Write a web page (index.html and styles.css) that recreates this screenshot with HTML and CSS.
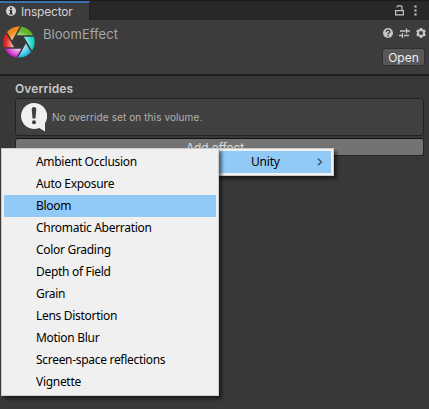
FILE: index.html
```html
<!DOCTYPE html>
<html lang="en">
<head>
<meta charset="utf-8">
<title>Inspector</title>
<link rel="stylesheet" href="styles.css">
</head>
<body>
<div class="window">
  <div class="tabbar">
    <div class="tab">
      <svg class="info" width="10" height="10" viewBox="0 0 10 10"><circle cx="5" cy="5" r="5" fill="#d2d2d2"/><path d="M4 1.5h2v1.7H4zM3.5 4H6v3.2h.7v1.2H3.3V7.2H4V5.1h-.5z" fill="#353535"/></svg>
      <span>Inspector</span>
    </div>
    <div class="tabtools">
      <svg width="9" height="11" viewBox="0 0 9 11" fill="none" stroke="#c4c4c4"><path d="M.6 5.6h7.8v4.3H.6zM2 2.5V2Q2 .8 3.2.8h2.4Q7 .8 7 2v3.5" stroke-width="1.2"/></svg>
      <svg width="3" height="11" viewBox="0 0 3 11" fill="#c4c4c4"><path d="M.4.4h2.2v2.2H.4zM.4 4.4h2.2v2.2H.4zM.4 8.4h2.2v2.2H.4z"/></svg>
    </div>
  </div>
  <header class="header">
    <svg class="logo" width="32" height="32" viewBox="-16 -16 32 32">
      <defs>
        <clipPath id="disc"><circle r="15.6"/></clipPath>
        <radialGradient id="shine" gradientUnits="userSpaceOnUse" cx="0" cy="2" r="16"><stop offset=".3" stop-color="#fff" stop-opacity=".75"/><stop offset=".85" stop-color="#fff" stop-opacity="0"/></radialGradient>
      </defs>
      <g clip-path="url(#disc)">
        <path fill="#f08a18" d="M-7-.0-13.5-11-16-16 2.7-17-3.5-6z"/>
        <path fill="#62b52c" d="M-3.5-6 2.7-17 18-17V-6H3.5z"/>
        <path fill="#19d3c4" d="M3.5-6H18V11h-4.5L7 0z"/>
        <path fill="#16b4e0" d="M7 0 13.5 11 16 16-2.7 17 3.5 6z"/>
        <path fill="#c81fc8" d="M3.5 6-2.7 17-18 17V6h14.5z"/>
        <path fill="#e52222" d="M-3.5 6H-18V-11h4.5L-7 0z"/>
        <circle r="16" fill="url(#shine)"/>
        <path fill="#383838" d="M-3.5-6h7L7 0 3.5 6h-7L-7 0z"/>
        <path fill="none" stroke="#383838" stroke-width="1.5" d="M-7 0 2.7-17M-3.5-6H17M3.5-6 13.5 11M7 0-2.7 17M3.5 6H-17M-3.5 6-13.5-11"/>
      </g>
    </svg>
    <h1>BloomEffect</h1>
    <div class="actions">
      <div class="icons">
        <svg width="10" height="10" viewBox="0 0 10 10"><circle cx="5" cy="5" r="5" fill="#c4c4c4"/><path d="M3.2 3.8Q3.3 2.2 5 2.2t1.8 1.5Q6.8 4.5 5.8 5 5 5.4 5 6.2M5 7v1.4" fill="none" stroke="#353535" stroke-width="1.3"/></svg>
        <svg width="11" height="10" viewBox="0 0 11 10" fill="none" stroke="#c4c4c4" stroke-width="1.3"><path d="M1 3h5.5M8 3h3M7.5.5v5M0 7.5h3M5 7.5h5M3.5 5v5"/></svg>
        <svg width="10" height="10" viewBox="-5 -5 10 10" stroke="#c4c4c4" fill="none"><circle r="3" stroke-width="2.2"/><path stroke-width="2.4" d="M0-5v2M0 5V3M-4.3-2.5-2.6-1.5M4.3 2.5 2.6 1.5M-4.3 2.5-2.6 1.5M4.3-2.5 2.6-1.5"/></svg>
      </div>
      <button class="open">Open</button>
    </div>
  </header>
  <main>
    <h2>Overrides</h2>
    <div class="notice">
      <svg width="26" height="29" viewBox="0 0 26 29"><path fill="#f0f0f0" d="M13 0a13 13 0 1 0 5.3 24.9L24 28.5V20A13 13 0 0 0 13 0z"/><path fill="#404040" d="M10.7 6q0-2 2.3-2t2.3 2l-.8 9.5h-3z"/><circle cx="13" cy="19.2" r="2" fill="#404040"/></svg>
      <span>No override set on this volume.</span>
    </div>
    <button class="add">Add effect</button>
  </main>
</div>
<div class="menu submenu"><div class="item selected"><span>Unity</span><svg width="6" height="8" viewBox="0 0 6 8"><path d="M1 .7 4.4 4 1 7.3" fill="none" stroke="#43505c" stroke-width="1.4"/></svg></div></div>
<div class="menu effects">
  <div class="item"><span>Ambient Occlusion</span></div>
  <div class="item"><span>Auto Exposure</span></div>
  <div class="item selected"><span>Bloom</span></div>
  <div class="item"><span>Chromatic Aberration</span></div>
  <div class="item"><span>Color Grading</span></div>
  <div class="item"><span>Depth of Field</span></div>
  <div class="item"><span>Grain</span></div>
  <div class="item"><span>Lens Distortion</span></div>
  <div class="item"><span>Motion Blur</span></div>
  <div class="item"><span>Screen-space reflections</span></div>
  <div class="item"><span>Vignette</span></div>
</div>
</body>
</html>
```
FILE: styles.css
```css
* { box-sizing: border-box; }
body { margin: 0; overflow: hidden; font-family: Inter, sans-serif; }
svg { display: block; flex: none; }
button { font-family: inherit; padding: 0; }
.window { height: 409px; background: #383838; }
.tabbar { height: 20px; display: flex; justify-content: space-between; background: #282828; border-top: 1px solid #191919; border-bottom: 1px solid #232323; }
.tab { width: 90px; height: 19px; display: flex; align-items: center; gap: 5px; padding: 0 0 1px 6px; border-top: 2px solid #3a72b0; border-right: 1px solid #202020; background: #3c3c3c; color: #d2d2d2; font-size: 12px; letter-spacing: -.2px; }
.tabtools { display: flex; gap: 10px; padding: 4px 12px 0 0; }
.header { height: 56px; display: flex; padding: 6px 4px 0 3px; background: #3c3c3c; border-bottom: 2px solid #202020; }
h1 { margin: 0 0 0 8px; font-size: 13px; line-height: 17px; font-weight: 400; letter-spacing: .05px; color: #a5a5a5; }
.actions { margin-left: auto; display: flex; flex-direction: column; align-items: flex-end; }
.icons { display: flex; gap: 6px; margin: 2px -1px 0 0; }
.open { width: 43px; height: 18px; margin-top: 10px; border: 1px solid #303030; border-radius: 3px; background: #585858; color: #eee; font-size: 12px; line-height: 15px; }
main { padding: 5px 5px 0 15px; display: flex; flex-direction: column; }
h2 { margin: 0; height: 17px; font-size: 12px; line-height: 15px; font-weight: 600; letter-spacing: .1px; color: #c8c8c8; }
.notice { height: 38px; display: flex; align-items: center; gap: 5px; padding-left: 5px; border: 1px solid #232323; border-radius: 3px; background: #404040; color: #b2b2b2; font-size: 10px; letter-spacing: .1px; }
.add { height: 18px; margin-top: 2px; padding-right: 9px; border: 1px solid #242424; border-top-color: #141414; border-radius: 3px; background: #737373; color: #ddd; font-size: 12px; line-height: 15px; letter-spacing: -.1px; }
.menu { position: absolute; top: 148px; padding: 2px; border: 1px solid #ccc; background: #f0f0f0; box-shadow: 3px 3px 3px rgba(0,0,0,.5); color: #000; font: 12px "Noto Sans", sans-serif; letter-spacing: -.3px; }
.effects { left: 1px; width: 218px; height: 248px; }
.submenu { left: 216px; width: 118px; height: 28px; letter-spacing: -.2px; }
.item { height: 22px; display: flex; align-items: center; justify-content: space-between; padding: 0 8px 1px 32px; white-space: nowrap; }
.selected { background: #91c9f7; }
```
